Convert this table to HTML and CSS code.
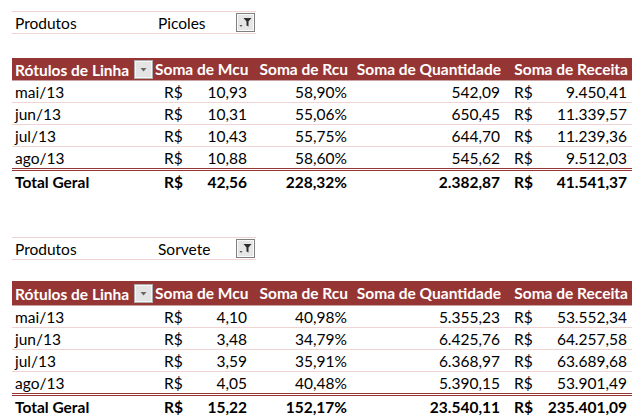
FILE: index.html
```html
<!DOCTYPE html>
<html lang="pt">
<head>
<meta charset="utf-8">
<link rel="stylesheet" href="styles.css">
</head>
<body>
<div class="sheet">
  <section class="pivot-block">
    <div class="filter">
      <span class="f-label">Produtos</span>
      <span class="f-value">Picoles</span>
      <span class="f-btn"><svg width="19" height="19" viewBox="0 0 19 19"><rect x="0.5" y="0.5" width="18" height="18" fill="#e6e6e6" stroke="#7f7f7f"/><rect x="1.5" y="1.5" width="16" height="16" fill="none" stroke="#fafafa"/><path d="M7.5 5h8l-3 3.5v5l-2-1v-4z" fill="#2e2e2e"/><path d="M3.5 12h3l-1.5 2z" fill="#555"/></svg></span>
    </div>
    <table class="pivot">
      <colgroup><col class="c1"><col class="c2"><col class="c3"><col class="c4"><col class="c5"></colgroup>
      <thead>
        <tr><th class="first"><span>Rótulos de Linha</span><span class="dd"><svg width="19" height="19" viewBox="0 0 19 19"><rect x="0.5" y="0.5" width="18" height="18" fill="#e4e4e4" stroke="#b0b0b0"/><rect x="1.5" y="1.5" width="16" height="16" fill="none" stroke="#f6f6f6"/><path d="M6.5 8h6l-3 3.5z" fill="#666"/></svg></span></th><th>Soma de Mcu</th><th>Soma de Rcu</th><th>Soma de Quantidade</th><th>Soma de Receita</th></tr>
      </thead>
      <tbody>
        <tr><td>mai/13</td><td><div class="acc"><span>R$</span><span>10,93</span></div></td><td class="num">58,90%</td><td class="num">542,09</td><td><div class="acc"><span>R$</span><span>9.450,41</span></div></td></tr>
        <tr><td>jun/13</td><td><div class="acc"><span>R$</span><span>10,31</span></div></td><td class="num">55,06%</td><td class="num">650,45</td><td><div class="acc"><span>R$</span><span>11.339,57</span></div></td></tr>
        <tr><td>jul/13</td><td><div class="acc"><span>R$</span><span>10,43</span></div></td><td class="num">55,75%</td><td class="num">644,70</td><td><div class="acc"><span>R$</span><span>11.239,36</span></div></td></tr>
        <tr><td>ago/13</td><td><div class="acc"><span>R$</span><span>10,88</span></div></td><td class="num">58,60%</td><td class="num">545,62</td><td><div class="acc"><span>R$</span><span>9.512,03</span></div></td></tr>
        <tr class="total"><td>Total Geral</td><td><div class="acc"><span>R$</span><span>42,56</span></div></td><td class="num">228,32%</td><td class="num">2.382,87</td><td><div class="acc"><span>R$</span><span>41.541,37</span></div></td></tr>
      </tbody>
    </table>
  </section>

  <section class="pivot-block second">
    <div class="filter">
      <span class="f-label">Produtos</span>
      <span class="f-value">Sorvete</span>
      <span class="f-btn"><svg width="19" height="19" viewBox="0 0 19 19"><rect x="0.5" y="0.5" width="18" height="18" fill="#e6e6e6" stroke="#7f7f7f"/><rect x="1.5" y="1.5" width="16" height="16" fill="none" stroke="#fafafa"/><path d="M7.5 5h8l-3 3.5v5l-2-1v-4z" fill="#2e2e2e"/><path d="M3.5 12h3l-1.5 2z" fill="#555"/></svg></span>
    </div>
    <table class="pivot">
      <colgroup><col class="c1"><col class="c2"><col class="c3"><col class="c4"><col class="c5"></colgroup>
      <thead>
        <tr><th class="first"><span>Rótulos de Linha</span><span class="dd"><svg width="19" height="19" viewBox="0 0 19 19"><rect x="0.5" y="0.5" width="18" height="18" fill="#e4e4e4" stroke="#b0b0b0"/><rect x="1.5" y="1.5" width="16" height="16" fill="none" stroke="#f6f6f6"/><path d="M6.5 8h6l-3 3.5z" fill="#666"/></svg></span></th><th>Soma de Mcu</th><th>Soma de Rcu</th><th>Soma de Quantidade</th><th>Soma de Receita</th></tr>
      </thead>
      <tbody>
        <tr><td>mai/13</td><td><div class="acc"><span>R$</span><span>4,10</span></div></td><td class="num">40,98%</td><td class="num">5.355,23</td><td><div class="acc"><span>R$</span><span>53.552,34</span></div></td></tr>
        <tr><td>jun/13</td><td><div class="acc"><span>R$</span><span>3,48</span></div></td><td class="num">34,79%</td><td class="num">6.425,76</td><td><div class="acc"><span>R$</span><span>64.257,58</span></div></td></tr>
        <tr><td>jul/13</td><td><div class="acc"><span>R$</span><span>3,59</span></div></td><td class="num">35,91%</td><td class="num">6.368,97</td><td><div class="acc"><span>R$</span><span>63.689,68</span></div></td></tr>
        <tr><td>ago/13</td><td><div class="acc"><span>R$</span><span>4,05</span></div></td><td class="num">40,48%</td><td class="num">5.390,15</td><td><div class="acc"><span>R$</span><span>53.901,49</span></div></td></tr>
        <tr class="total"><td>Total Geral</td><td><div class="acc"><span>R$</span><span>15,22</span></div></td><td class="num">152,17%</td><td class="num">23.540,11</td><td><div class="acc"><span>R$</span><span>235.401,09</span></div></td></tr>
      </tbody>
    </table>
  </section>
</div>
</body>
</html>
```

FILE: styles.css
```css
html, body {
  margin: 0;
  padding: 0;
  background: #ffffff;
}
body {
  font-family: Lato, "Open Sans", sans-serif;
  font-size: 15.5px;
  color: #000;
  overflow: hidden;
}
.sheet {
  padding: 11px 0 0 12px;
}
.pivot-block.second {
  margin-top: 45px;
}
.filter {
  display: grid;
  grid-template-columns: 143px 81px 20px;
  align-items: center;
  width: 244px;
  height: 21px;
  border-top: 1px solid #f0d4d3;
  border-bottom: 1px solid #f0d4d3;
}
.f-label {
  padding-left: 3px;
}
.f-value {
  padding-left: 3px;
}
.f-btn {
  display: flex;
  height: 19px;
}
.pivot {
  margin-top: 24px;
  border-collapse: collapse;
  table-layout: fixed;
  width: 620px;
}
.second .pivot {
  margin-top: 21px;
}
.c1 { width: 143px; }
.c2 { width: 97px; }
.c3 { width: 100px; }
.c4 { width: 153px; }
.c5 { width: 127px; }
.pivot th {
  background: #963634;
  color: #fff;
  font-weight: 700;
  height: 22px;
  padding: 0 4px 0 0;
  text-align: right;
  white-space: nowrap;
  border-bottom: 1px solid #c9a3a2;
}
.second .pivot th {
  height: 24px;
}
.pivot th.first {
  text-align: left;
  padding: 0 0 0 3px;
}
.pivot th.first span {
  vertical-align: middle;
}
.dd {
  display: inline-flex;
  margin-left: 5px;
  vertical-align: middle;
}
.pivot td {
  height: 21px;
  padding: 0 5px 0 3px;
  white-space: nowrap;
  border-bottom: 1px solid #f0d4d3;
}
.pivot td.num {
  text-align: right;
}
.acc {
  display: flex;
  justify-content: space-between;
  padding-left: 6px;
}
.pivot tbody tr:nth-child(4) td {
  border-bottom: 3px double #963634;
}
.pivot tr.total td {
  font-weight: 700;
  border-bottom: none;
}
```
